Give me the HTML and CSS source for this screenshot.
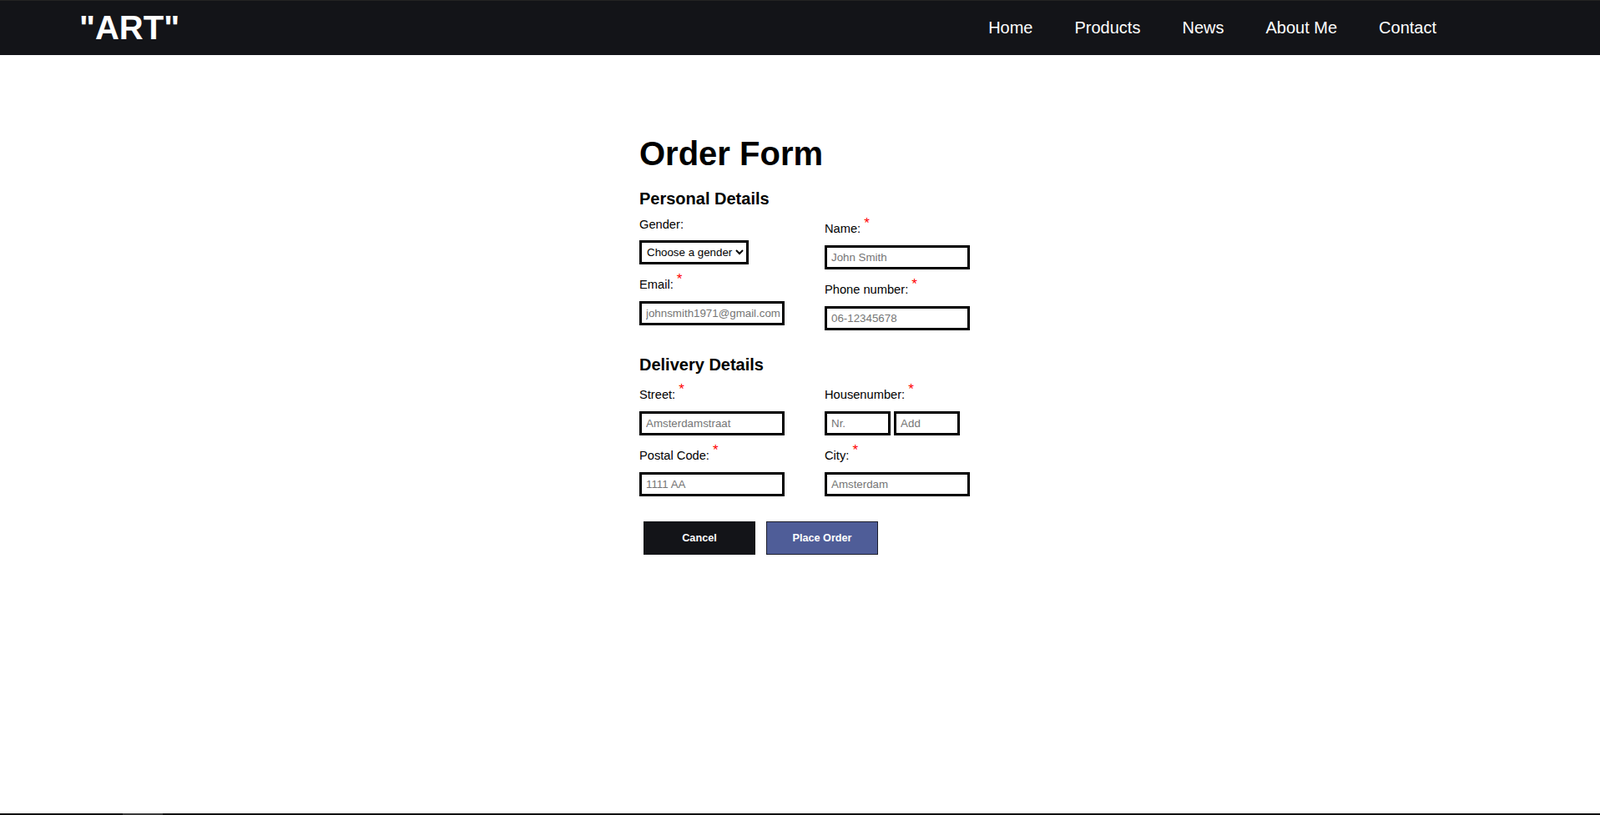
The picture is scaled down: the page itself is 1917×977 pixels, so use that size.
FILE: index.html
```html
<!DOCTYPE html>
<html lang="en">
<head>
<meta charset="utf-8">
<title>Order Form</title>
<link rel="stylesheet" href="styles.css">
</head>
<body>
<header class="topbar">
  <div class="logo">"ART"</div>
  <nav>
    <ul class="menu">
      <li><a href="#">Home</a></li>
      <li><a href="#">Products</a></li>
      <li><a href="#">News</a></li>
      <li><a href="#">About Me</a></li>
      <li><a href="#">Contact</a></li>
    </ul>
  </nav>
</header>

<main class="page">
  <form class="order">
    <h1 class="title">Order Form</h1>

    <section class="section">
      <h2 class="heading">Personal Details</h2>
      <div class="cols">
        <div class="col">
          <div class="field">
            <label class="label label-plain" for="gender">Gender:</label>
            <select id="gender" class="select">
              <option>Choose a gender</option>
              <option>Male</option>
              <option>Female</option>
            </select>
          </div>
          <div class="field">
            <label class="label" for="email">Email: <sup class="req">*</sup></label>
            <input id="email" class="input" type="text" placeholder="johnsmith1971@gmail.com">
          </div>
        </div>
        <div class="col">
          <div class="field">
            <label class="label" for="name">Name: <sup class="req">*</sup></label>
            <input id="name" class="input" type="text" placeholder="John Smith">
          </div>
          <div class="field">
            <label class="label" for="phone">Phone number: <sup class="req">*</sup></label>
            <input id="phone" class="input" type="text" placeholder="06-12345678">
          </div>
        </div>
      </div>
    </section>

    <section class="section">
      <h2 class="heading">Delivery Details</h2>
      <div class="cols">
        <div class="col">
          <div class="field">
            <label class="label" for="street">Street: <sup class="req">*</sup></label>
            <input id="street" class="input" type="text" placeholder="Amsterdamstraat">
          </div>
          <div class="field">
            <label class="label" for="postal">Postal Code: <sup class="req">*</sup></label>
            <input id="postal" class="input" type="text" placeholder="1111 AA">
          </div>
        </div>
        <div class="col">
          <div class="field">
            <label class="label" for="nr">Housenumber: <sup class="req">*</sup></label>
            <input id="nr" class="input input-small" type="text" placeholder="Nr."> <input class="input input-small" type="text" placeholder="Add">
          </div>
          <div class="field">
            <label class="label" for="city">City: <sup class="req">*</sup></label>
            <input id="city" class="input" type="text" placeholder="Amsterdam">
          </div>
        </div>
      </div>
    </section>

    <div class="actions">
      <button type="button" class="btn btn-cancel">Cancel</button>
      <button type="button" class="btn btn-order">Place Order</button>
    </div>
  </form>
</main>

<footer class="footer"><span class="footer-mark"></span></footer>
</body>
</html>
```

FILE: styles.css
```css
* {
  box-sizing: border-box;
}

html, body {
  margin: 0;
  padding: 0;
}

body {
  font-family: "Liberation Sans", Arial, sans-serif;
  color: #000;
  background: #fff;
  min-height: 100vh;
  display: flex;
  flex-direction: column;
}

.topbar {
  height: 66px;
  border-top: 1px solid #232323;
  background: #131418;
  display: flex;
  align-items: center;
  justify-content: space-between;
  padding: 0 171px 0 95px;
}

.logo {
  color: #fff;
  font-size: 40px;
  font-weight: bold;
  line-height: normal;
}

.menu {
  list-style: none;
  margin: 0;
  padding: 0;
  display: flex;
}

.menu a {
  display: block;
  padding: 0 25px;
  color: #fff;
  text-decoration: none;
  font-size: 20px;
  line-height: normal;
}

.page {
  flex: 1;
  padding-top: 96px;
}

.order {
  width: 385px;
  margin: 0 auto;
}

.title {
  margin: 0 0 20px;
  font-size: 40px;
  font-weight: bold;
  line-height: normal;
}

.section {
  margin-bottom: 21px;
}

.heading {
  margin: 0 0 9px;
  font-size: 20px;
  font-weight: bold;
  line-height: normal;
}

.cols {
  display: flex;
  gap: 48px;
}

.col {
  width: 174px;
  flex: none;
}

.field {
  margin-bottom: 9px;
  font-size: 14.67px;
  white-space: nowrap;
}

.label {
  display: block;
  font-size: 14.67px;
  line-height: normal;
  margin-bottom: 12px;
}

.label-plain {
  margin-top: 2px;
  margin-bottom: 11px;
}

.req {
  color: #ff0000;
  font-size: 17px;
  line-height: 1;
}

.input,
.select {
  font-family: "Liberation Sans", Arial, sans-serif;
  font-size: 13.33px;
  height: 29px;
  border: 3px solid #000;
  border-radius: 0;
  background: #fff;
  color: #000;
  margin: 0;
  vertical-align: top;
}

.input {
  width: 174px;
  padding: 0 1px 0 5px;
}

.input::placeholder {
  color: #757575;
}

.input-small {
  width: 79px;
}

.select {
  padding: 0 0 0 2px;
}

.actions {
  margin-top: 21px;
  padding-left: 5px;
  display: flex;
  gap: 13px;
}

.btn {
  width: 134px;
  height: 40px;
  margin: 0;
  color: #fff;
  font-family: "Liberation Sans", Arial, sans-serif;
  font-size: 12.67px;
  font-weight: bold;
  cursor: pointer;
}

.btn-cancel {
  background: #131418;
  border: 1px solid #131418;
}

.btn-order {
  background: #4f5d98;
  border: 1px solid #1c1d2b;
}

.footer {
  height: 2px;
  background: #111;
}

.footer-mark {
  display: block;
  width: 48px;
  height: 2px;
  margin-left: 147px;
  background: #3a3a3a;
}
```
